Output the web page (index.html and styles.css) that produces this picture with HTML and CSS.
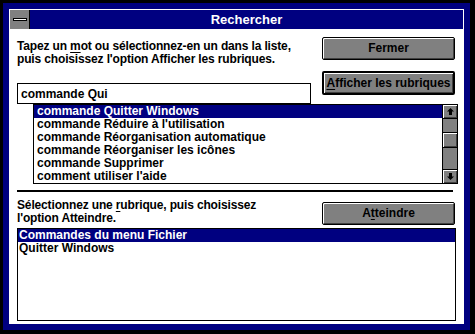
FILE: index.html
```html
<!DOCTYPE html>
<html lang="fr">
<head>
    <meta charset="UTF-8">
    <title>Rechercher</title>
    <link rel="stylesheet" href="styles.css">
</head>
<body>
    <div class="window">
        <header class="titlebar">
            <div class="sysmenu"><span class="sysmenu-bar"></span></div>
            <h1 class="title">Rechercher</h1>
        </header>

        <main class="dialog">
            <div class="section">
                <div class="search-col">
                    <p class="hint">Tapez un <u>m</u>ot ou sélectionnez-en un dans la liste,<br>puis choisissez l'option Afficher les rubriques.</p>
                    <input type="text" class="search-input" value="commande Qui">
                </div>
                <div class="buttons">
                    <button class="btn">Fermer</button>
                    <button class="btn btn-default"><u>A</u>fficher les rubriques</button>
                </div>
            </div>

            <div class="keyword-list">
                <ul class="list-items">
                    <li class="selected">commande Quitter Windows</li>
                    <li>commande Réduire à l'utilisation</li>
                    <li>commande Réorganisation automatique</li>
                    <li>commande Réorganiser les icônes</li>
                    <li>commande Supprimer</li>
                    <li>comment utiliser l'aide</li>
                </ul>
                <div class="scrollbar">
                    <div class="scroll-arrow">
                        <svg width="7" height="7" viewBox="0 0 7 7"><polygon points="3.5,0 7,3.5 5,3.5 5,7 2,7 2,3.5 0,3.5"/></svg>
                    </div>
                    <div class="scroll-track scroll-track-top"></div>
                    <div class="scroll-thumb"></div>
                    <div class="scroll-track"></div>
                    <div class="scroll-arrow scroll-arrow-down">
                        <svg width="7" height="7" viewBox="0 0 7 7"><polygon points="3.5,7 7,3.5 5,3.5 5,0 2,0 2,3.5 0,3.5"/></svg>
                    </div>
                </div>
            </div>

            <hr class="separator">

            <div class="section section-topics">
                <p class="hint">Sélectionnez une <u>r</u>ubrique, puis choisissez<br>l'option Atteindre.</p>
                <div class="buttons buttons-topics">
                    <button class="btn">A<u>t</u>teindre</button>
                </div>
            </div>

            <ul class="list-items topic-list">
                <li class="selected">Commandes du menu Fichier</li>
                <li>Quitter Windows</li>
            </ul>
        </main>
    </div>
</body>
</html>
```

FILE: styles.css
```css
:root {
    --navy: #000080;
    --face: #808080;
    --shadow: #404040;
}

* {
    margin: 0;
    padding: 0;
    box-sizing: border-box;
}

body {
    background: #000;
    font-family: "Liberation Sans", Arial, sans-serif;
    font-weight: bold;
    font-size: 12px;
    line-height: 13px;
    color: #000;
}

.window {
    width: 467px;
    height: 327px;
    margin: 3px 0 0 3px;
    border: 6px solid var(--navy);
    padding: 1px;
    background: #fff;
    display: flex;
    flex-direction: column;
}

.titlebar {
    height: 19px;
    display: flex;
    background: var(--navy);
}

.sysmenu {
    width: 20px;
    background: var(--face);
    border-right: 1px solid #000;
    display: flex;
    align-items: center;
    justify-content: center;
}

.sysmenu-bar {
    width: 14px;
    height: 3px;
    background: #fff;
    border: 1px solid #000;
    margin-top: -1px;
}

.title {
    flex: 1;
    color: #fff;
    font-size: 13px;
    line-height: 19px;
    text-align: center;
    font-weight: bold;
}

.dialog {
    flex: 1;
    padding: 8px 8px 0 7px;
}

.section {
    display: grid;
    grid-template-columns: 294px 133px;
    column-gap: 11px;
}

.hint {
    margin-top: 3px;
    white-space: nowrap;
    letter-spacing: -0.15px;
}

u {
    text-decoration-thickness: 1px;
    text-underline-offset: 2px;
}

.search-input {
    display: block;
    width: 294px;
    height: 21px;
    margin-top: 17px;
    border: 1px solid #000;
    padding: 0 3px;
    font: inherit;
    color: #000;
    background: #fff;
    outline: none;
}

.buttons {
    display: flex;
    flex-direction: column;
    gap: 11px;
}

.btn {
    height: 23px;
    font: inherit;
    color: #000;
    background: var(--face);
    border: 1px solid #000;
    border-radius: 2px;
    box-shadow: inset 1px 1px 0 #fff, inset -1px -1px 0 var(--shadow);
    text-align: center;
}

.btn-default {
    height: 24px;
    border-width: 2px;
}

.keyword-list {
    width: 425px;
    height: 80px;
    margin-left: 16px;
    border: 1px solid #000;
    display: flex;
}

.list-items {
    list-style: none;
    flex: 1;
    overflow: hidden;
}

.list-items li {
    height: 13px;
    padding-left: 3px;
    white-space: nowrap;
}

.list-items li.selected {
    background: var(--navy);
    color: #fff;
}

.scrollbar {
    width: 15px;
    border-left: 1px solid #000;
    display: flex;
    flex-direction: column;
    background: var(--face);
}

.scroll-arrow {
    height: 14px;
    border-bottom: 1px solid #000;
    box-shadow: inset 1px 1px 0 #fff, inset -1px -1px 0 var(--shadow);
    display: flex;
    align-items: center;
    justify-content: center;
}

.scroll-arrow-down {
    border-bottom: none;
    border-top: 1px solid #000;
}

.scroll-track {
    flex: 1;
}

.scroll-track-top {
    flex: 0 0 13px;
}

.scroll-thumb {
    height: 16px;
    border-top: 1px solid #000;
    border-bottom: 1px solid #000;
    box-shadow: inset 1px 1px 0 #fff, inset -1px -1px 0 var(--shadow);
}

.separator {
    width: 436px;
    height: 2px;
    margin-top: 6px;
    border: none;
    background: #000;
}

.section-topics {
    margin-top: 7px;
}

.section-topics .hint {
    margin-top: 0;
}

.buttons-topics {
    padding-top: 3px;
}

.topic-list {
    width: 439px;
    height: 93px;
    margin-top: 3px;
    border: 1px solid #000;
}

.topic-list li {
    padding-left: 1px;
}
```
